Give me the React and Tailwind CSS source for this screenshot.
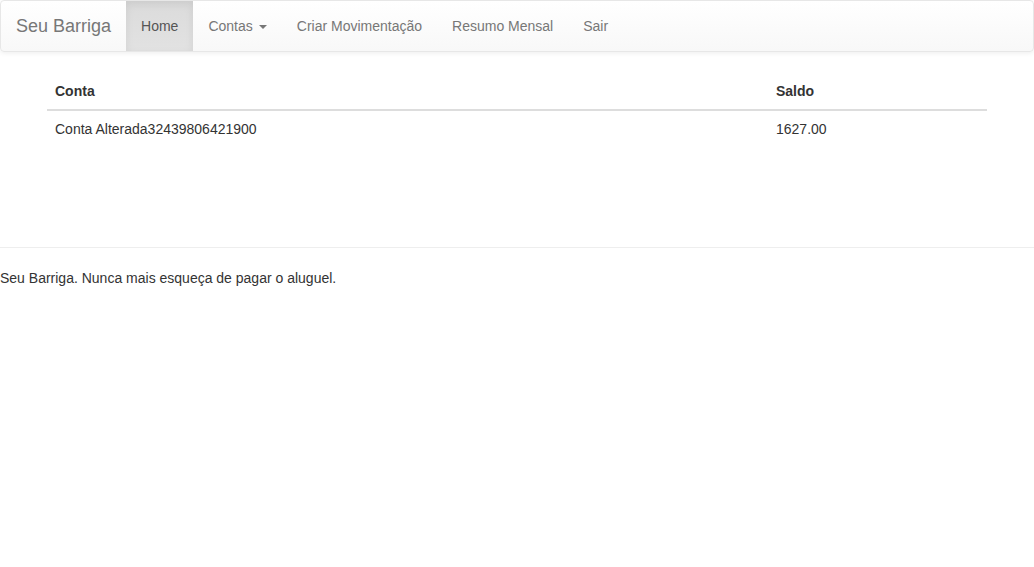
export default function App() {
  const links = ["Contas", "Criar Movimentação", "Resumo Mensal", "Sair"];

  return (
    <div className="min-h-[567px] bg-white text-[14px] leading-5 text-[#333] font-['Liberation_Sans',Arial,sans-serif]">
      <nav className="flex h-[52px] rounded border border-[#e7e7e7] bg-linear-to-b from-white to-[#f8f8f8] shadow-[0_1px_5px_rgba(0,0,0,0.075)]">
        <a className="px-[15px] py-[15px] text-[18px] leading-5 text-[#777]">Seu Barriga</a>
        <ul className="flex">
          <li className="px-[15px] py-[15px] text-[#555] bg-linear-to-b from-[#dbdbdb] to-[#e2e2e2] shadow-[inset_0_3px_9px_rgba(0,0,0,0.075)]">
            Home
          </li>
          {links.map((label) => (
            <li key={label} className="flex items-center px-[15px] py-[15px] text-[#777]">
              {label}
              {label === "Contas" && (
                <span className="ml-[6px] mt-[1px] inline-block h-0 w-0 border-x-4 border-t-4 border-x-transparent border-t-[#777]" />
              )}
            </li>
          ))}
        </ul>
      </nav>

      <div className="mx-auto mt-[21px] w-[970px] px-[15px]">
        <table className="mb-5 w-full border-collapse text-left">
          <thead>
            <tr>
              <th className="w-[721px] border-b-2 border-[#ddd] p-2 font-bold">Conta</th>
              <th className="border-b-2 border-[#ddd] p-2 font-bold">Saldo</th>
            </tr>
          </thead>
          <tbody>
            <tr>
              <td className="p-2">Conta Alterada32439806421900</td>
              <td className="p-2">1627.00</td>
            </tr>
          </tbody>
        </table>
      </div>

      <footer className="pt-[60px]">
        <hr className="my-5 border-t border-[#eee]" />
        <p>Seu Barriga. Nunca mais esqueça de pagar o aluguel.</p>
      </footer>
    </div>
  );
}
